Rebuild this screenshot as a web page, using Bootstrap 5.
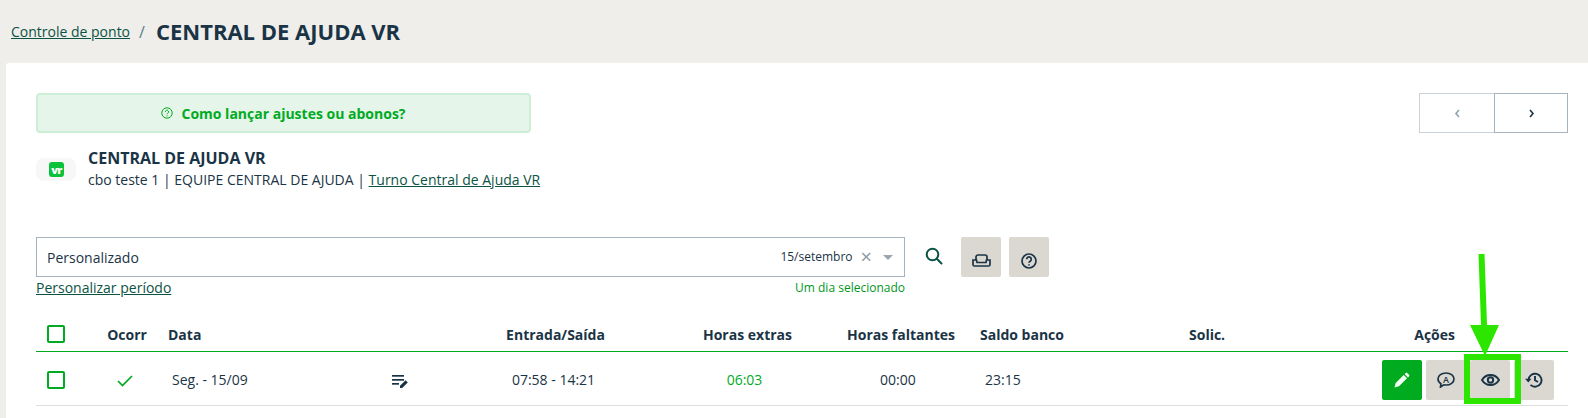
<!DOCTYPE html>
<html lang="pt-BR">
<head>
  <meta charset="UTF-8" />
  <meta name="viewport" content="width=device-width, initial-scale=1" />
  <title>Controle de ponto - Central de Ajuda VR</title>
  <link href="https://cdn.jsdelivr.net/npm/bootstrap@5.3.0/dist/css/bootstrap.min.css" rel="stylesheet" />
  <style>
    html, body {
      height: 418px;
      overflow: hidden;
    }

    body {
      position: relative;
      background: #efeeea;
      color: #1a3446;
      font-family: "Open Sans", sans-serif;
      font-size: 14px;
    }

    a {
      color: #0b5345;
    }

    .page-head {
      height: 63px;
      padding: 0 0 0 11px;
    }

    .page-head .crumb-sep {
      margin: 0 11px 0 9px;
      color: #5d7c8e;
      font-size: 16px;
    }

    .page-title {
      margin: 0;
      font-size: 22px;
      font-weight: 700;
      color: #1a3446;
    }

    .sheet {
      margin-left: 6px;
      height: 355px;
      padding: 30px 20px 0 30px;
      background: #fff;
      border-top-left-radius: 3px;
    }

    .help-bar {
      width: 495px;
      height: 40px;
      background: #e5f5e9;
      border: 2px solid #cdeed6;
      border-radius: 4px;
      color: #00ab1f;
      font-weight: 700;
    }

    .pager {
      width: 149px;
      height: 40px;
    }

    .pager-btn {
      flex: 1;
      background: #fff;
      border: 1px solid #a5b4bf;
      color: #1a3446;
    }

    .pager-btn:first-child {
      flex: 0 0 75px;
      border-color: #c9d2d8;
      border-right: 0;
      color: #8fa2ae;
    }

    .person {
      margin-top: 10px;
      height: 50px;
    }

    .logo-box {
      width: 40px;
      height: 23px;
      margin-right: 12px;
      margin-top: 2px;
      background: #f7f7f7;
      border-radius: 8px;
    }

    .person-name {
      font-size: 16px;
      font-weight: 700;
      line-height: 22px;
    }

    .person-line {
      line-height: 21px;
    }

    .filter-row {
      margin-top: 44px;
    }

    .period-select {
      width: 869px;
      height: 40px;
      padding: 0 11px 0 10px;
      border: 1px solid #a5b4bf;
    }

    .period-date {
      font-size: 12px;
    }

    .period-clear {
      margin: 0 11px 0 8px;
      color: #8c9aa3;
      font-size: 20px;
      line-height: 1;
    }

    .period-caret {
      width: 0;
      height: 0;
      border-left: 5px solid transparent;
      border-right: 5px solid transparent;
      border-top: 5px solid #9aa5ad;
    }

    .search-btn {
      width: 56px;
      height: 40px;
    }

    .search-icon {
      margin-bottom: 2px;
      margin-left: 1px;
    }

    .tool-btn {
      width: 40px;
      height: 40px;
      padding: 0;
      border: 0;
      border-radius: 2px;
      background: #dbd8d2;
    }

    .tool-icon-low {
      margin-top: 7px;
    }

    .period-foot {
      width: 869px;
      height: 21px;
    }

    .period-note {
      font-size: 12px;
      color: #00971b;
    }

    .ponto-table {
      width: 1532px;
      margin-top: 22px;
      table-layout: fixed;
      border-collapse: collapse;
      color: #1a3446;
    }

    .ponto-table th {
      height: 31px;
      padding: 0 0 2px;
      border-bottom: 1px solid #00ab1f;
      font-weight: 700;
      white-space: nowrap;
    }

    .ponto-table td {
      height: 54px;
      padding: 3px 0 0;
      border-bottom: 1px solid #dedede;
      white-space: nowrap;
    }

    .col-check { width: 55px; }
    .col-ocorr { width: 72px; }
    .col-data { width: 229px; }
    .col-note { width: 74px; }
    .col-hours { width: 179px; }
    .col-extra { width: 201px; }
    .col-miss { width: 106px; }
    .col-saldo { width: 228px; }
    .col-solic { width: 120px; }

    .tick-box {
      display: block;
      width: 18px;
      height: 18px;
      margin-left: 11px;
      border: 2px solid #00ab1f;
      border-radius: 2px;
    }

    .ponto-table .ocorr-cell { padding-right: 4px; }
    .ponto-table .data-head { padding-left: 5px; }
    .ponto-table .data-cell { padding-left: 9px; }
    .ponto-table .hours-cell { padding-right: 4px; }
    .ponto-table .extra-head { padding-left: 4px; }
    .ponto-table .extra-cell { padding-right: 2px; color: #00ab1f; }
    .ponto-table .miss-head { padding-left: 1px; }
    .ponto-table .miss-cell { padding-left: 34px; }
    .ponto-table .saldo-head { padding-left: 28px; }
    .ponto-table .saldo-cell { padding-left: 33px; }
    .ponto-table .solic-head { padding-left: 9px; }
    .ponto-table .acoes-head { padding-right: 113px; }
    .ponto-table .acoes-cell { padding-right: 14px; }

    .edit-btn {
      background: #00ab1f;
    }

    .callout {
      position: absolute;
      top: 0;
      left: 0;
      pointer-events: none;
    }
  </style>
</head>
<body>

  <!-- Cabecalho -->
  <header class="page-head d-flex align-items-center">
    <a href="#">Controle de ponto</a>
    <span class="crumb-sep">/</span>
    <h1 class="page-title">CENTRAL DE AJUDA VR</h1>
  </header>

  <main class="sheet">
    <div class="d-flex justify-content-between align-items-start">
      <div class="help-bar d-flex align-items-center justify-content-center gap-2">
        <svg width="12" height="12" viewBox="0 0 12 12" fill="none" stroke="#00ab1f">
          <circle cx="6" cy="6" r="5.2" />
          <path d="M4.4 4.8a1.6 1.6 0 1 1 2.4 1.4c-.5.3-.8.6-.8 1.1" />
          <path d="M6 8.4v1" />
        </svg>
        <span>Como lançar ajustes ou abonos?</span>
      </div>
      <div class="pager d-flex">
        <button class="pager-btn d-flex align-items-center justify-content-center p-0" type="button">
          <svg width="7" height="9" viewBox="0 0 7 9" fill="none" stroke="currentColor" stroke-width="1.6"><path d="M5 1 2 4.5 5 8" /></svg>
        </button>
        <button class="pager-btn d-flex align-items-center justify-content-center p-0" type="button">
          <svg width="7" height="9" viewBox="0 0 7 9" fill="none" stroke="currentColor" stroke-width="1.6"><path d="M2 1l3 3.5L2 8" /></svg>
        </button>
      </div>
    </div>

    <div class="person d-flex align-items-center">
      <div class="logo-box d-flex align-items-center justify-content-center">
        <svg width="15" height="15" viewBox="0 0 15 15">
          <rect width="15" height="15" rx="3" fill="#0cc23a" />
          <text x="7.5" y="11.500" text-anchor="middle" fill="#fff" font-family="Open Sans, sans-serif" font-size="11" font-weight="800" letter-spacing="-.6">vr</text>
        </svg>
      </div>
      <div>
        <div class="person-name">CENTRAL DE AJUDA VR</div>
        <div class="person-line">cbo teste 1 | EQUIPE CENTRAL DE AJUDA | <a href="#">Turno Central de Ajuda VR</a></div>
      </div>
    </div>

    <!-- Filtro -->
    <div class="filter-row d-flex align-items-center">
      <div class="period-select d-flex align-items-center">
        <span class="flex-grow-1">Personalizado</span>
        <span class="period-date">15/setembro</span>
        <span class="period-clear">×</span>
        <span class="period-caret"></span>
      </div>
      <div class="search-btn d-flex align-items-center justify-content-center">
        <svg class="search-icon" width="18" height="18" viewBox="0 0 18 18" fill="none" stroke="#0b5345" stroke-width="2">
          <circle cx="7.5" cy="7.5" r="5.8" />
          <path d="M11.8 11.8 16.5 16.5" stroke-linecap="round" />
        </svg>
      </div>
      <button class="tool-btn d-flex align-items-center justify-content-center me-2" type="button">
        <svg class="tool-icon-low" width="19" height="13" viewBox="0 0 19 13" fill="none" stroke="#1a3446" stroke-width="1.700">
          <path d="M4 6V3a2 2 0 0 1 2-2h7a2 2 0 0 1 2 2v3" />
          <path d="M1 6h3.500l.5 2.500h9l.5-2.500H18v4.500a1.500 1.500 0 0 1-1.500 1.500h-14A1.500 1.500 0 0 1 1 10.500z" />
        </svg>
      </button>
      <button class="tool-btn d-flex align-items-center justify-content-center" type="button">
        <svg class="tool-icon-low" width="16" height="16" viewBox="0 0 16 16" fill="none" stroke="#1a3446" stroke-width="1.700">
          <circle cx="8" cy="8" r="7" />
          <path d="M5.700 6.200a2.300 2.300 0 1 1 3.500 2c-.8.500-1.200.9-1.200 1.600" />
          <path d="M8 11.200v1.300" />
        </svg>
      </button>
    </div>
    <div class="period-foot d-flex justify-content-between align-items-center">
      <a href="#">Personalizar período</a>
      <span class="period-note">Um dia selecionado</span>
    </div>

    <!-- Marcacoes -->
    <table class="ponto-table">
      <colgroup>
        <col class="col-check" /><col class="col-ocorr" /><col class="col-data" /><col class="col-note" />
        <col class="col-hours" /><col class="col-extra" /><col class="col-miss" /><col class="col-saldo" />
        <col class="col-solic" /><col />
      </colgroup>
      <thead>
        <tr>
          <th><span class="tick-box"></span></th>
          <th class="text-center">Ocorr</th>
          <th class="data-head">Data</th>
          <th></th>
          <th class="text-center">Entrada/Saída</th>
          <th class="text-center extra-head">Horas extras</th>
          <th class="miss-head">Horas faltantes</th>
          <th class="saldo-head">Saldo banco</th>
          <th class="solic-head">Solic.</th>
          <th class="text-end acoes-head">Ações</th>
        </tr>
      </thead>
      <tbody>
        <tr>
          <td><span class="tick-box"></span></td>
          <td class="text-center ocorr-cell">
            <svg width="16" height="12" viewBox="0 0 16 12" fill="none" stroke="#00ab1f" stroke-width="1.700"><path d="M1 6l4.500 4.500L15 1" /></svg>
          </td>
          <td class="data-cell">Seg. - 15/09</td>
          <td>
            <svg width="17" height="14" viewBox="0 0 17 14" fill="#1a3446">
              <rect y="1" width="12" height="1.700" /><rect y="5" width="12" height="1.700" /><rect y="9" width="7" height="1.700" />
              <path d="M8 14v-2.200l5.600-5.600 2.200 2.200L10.200 14z" />
            </svg>
          </td>
          <td class="text-center hours-cell">07:58 - 14:21</td>
          <td class="text-center extra-cell">06:03</td>
          <td class="miss-cell">00:00</td>
          <td class="saldo-cell">23:15</td>
          <td></td>
          <td class="acoes-cell">
            <div class="d-flex justify-content-end gap-1">
              <button class="tool-btn edit-btn d-flex align-items-center justify-content-center" type="button">
                <svg width="16" height="16" viewBox="0 0 16 16" fill="#f2fff2">
                  <path d="M.5 15.500l1.200-4.500 8-8 3.300 3.300-8 8z" />
                  <path d="M10.600 2.100l1.200-1.200a1 1 0 0 1 1.400 0l1.900 1.900a1 1 0 0 1 0 1.400l-1.200 1.200z" />
                </svg>
              </button>
              <button class="tool-btn d-flex align-items-center justify-content-center" type="button">
                <svg width="18" height="16" viewBox="0 0 18 16">
                  <path d="M9 1c4.400 0 8 2.500 8 6s-3.600 6-8 6c-.8 0-1.500-.1-2.200-.2L3.500 15l.4-3.300C2 10.600 1 8.900 1 7c0-3.500 3.600-6 8-6z" fill="none" stroke="#1a3446" stroke-width="1.700" />
                  <text x="9" y="10.500" text-anchor="middle" fill="#1a3446" font-family="Open Sans, sans-serif" font-size="9" font-weight="600">A</text>
                </svg>
              </button>
              <button class="tool-btn d-flex align-items-center justify-content-center" type="button">
                <svg width="19" height="12" viewBox="0 0 19 12" fill="none" stroke="#1a3446" stroke-width="2">
                  <path d="M1 6c2-3.300 5-5 8.500-5s6.500 1.700 8.500 5c-2 3.300-5 5-8.500 5S3 9.300 1 6z" />
                  <circle cx="9.500" cy="6" r="2.700" />
                </svg>
              </button>
              <button class="tool-btn d-flex align-items-center justify-content-center" type="button">
                <svg width="18" height="16" viewBox="0 0 18 16" fill="none" stroke="#1a3446" stroke-width="1.900">
                  <path d="M3.500 8a6.500 6.500 0 1 1 2 4.900" />
                  <path d="M10 4v4.300l3 1.700" />
                  <path d="M0 6.800h6.500L3.300 10.500z" fill="#1a3446" stroke="none" />
                </svg>
              </button>
            </div>
          </td>
        </tr>
      </tbody>
    </table>
  </main>

  <!-- Destaque desenhado por cima do print -->
  <svg class="callout" width="1588" height="418" viewBox="0 0 1588 418">
    <path d="M1478.500 254l6 0 2.500 71h12l-14 31-15-31h11z" fill="#2ce600" />
    <rect x="1467" y="357" width="51" height="44" fill="none" stroke="#2ce600" stroke-width="6" />
  </svg>

  <script src="https://cdn.jsdelivr.net/npm/bootstrap@5.3.0/dist/js/bootstrap.bundle.min.js"></script>
</body>
</html>
